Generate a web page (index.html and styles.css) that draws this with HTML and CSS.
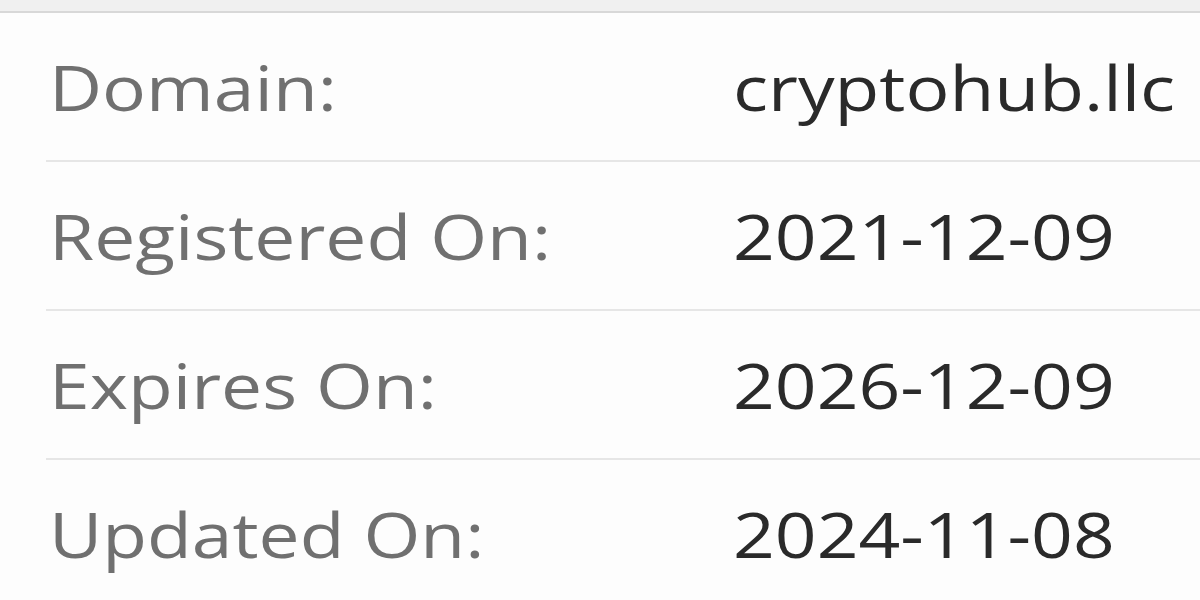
FILE: index.html
```html
<!DOCTYPE html>
<html lang="en">
<head>
<meta charset="utf-8">
<title>Domain info</title>
<link rel="stylesheet" href="styles.css">
</head>
<body>
<div class="topbar"></div>
<div class="info">
  <div class="row"><span class="label"><span class="txt">Domain:</span></span><span class="value txt">cryptohub.llc</span></div>
  <div class="row"><span class="label"><span class="txt">Registered On:</span></span><span class="value txt">2021-12-09</span></div>
  <div class="row"><span class="label"><span class="txt">Expires On:</span></span><span class="value txt">2026-12-09</span></div>
  <div class="row"><span class="label"><span class="txt">Updated On:</span></span><span class="value txt">2024-11-08</span></div>
</div>
</body>
</html>
```
FILE: styles.css
```css
html, body {
  margin: 0;
  padding: 0;
  background: #fdfdfd;
  font-family: "Open Sans", "Noto Sans", sans-serif;
  overflow: hidden;
}
.topbar {
  height: 11px;
  background: #f0f0f0;
  border-bottom: 2px solid #d8d8d8;
}
.info {
  padding-left: 46px;
}
.row {
  display: flex;
  align-items: center;
  height: 147px;
  font-size: 62px;
  line-height: 1.362;
  padding-top: 2px;
  box-sizing: border-box;
}
.row + .row {
  border-top: 2px solid #e6e6e6;
  height: 149px;
}
.txt {
  display: inline-block;
  transform: scaleX(1.18);
  transform-origin: left center;
  white-space: nowrap;
}
.label {
  width: 684px;
  flex: none;
  padding-left: 3px;
  color: #707070;
}
.value {
  color: #2a2a2a;
}
```
